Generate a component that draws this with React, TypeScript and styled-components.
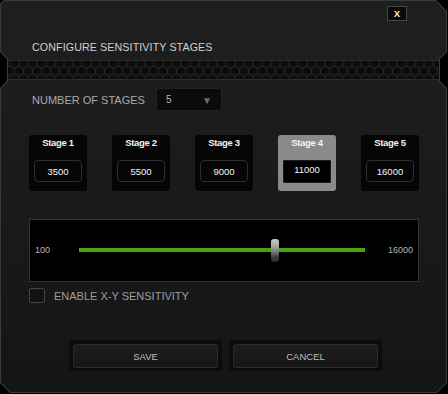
import React from "react";
import styled, { createGlobalStyle } from "styled-components";

const Global = createGlobalStyle`
  html, body { margin: 0; padding: 0; background: #000; }
  body { font-family: "Liberation Sans", Arial, sans-serif; }
  #root { width: 448px; height: 394px; }
`;

const OUTER =
  "polygon(4px 0, 436px 0, 447px 11px, 447px 52px, 440px 59px, 440px 81px, 447px 88px, 447px 383px, 437px 393px, 10px 393px, 0 383px, 0 88px, 7px 81px, 7px 59px, 0 52px, 0 4px)";
const INNER =
  "polygon(4.4px 1px, 435.6px 1px, 446px 11.4px, 446px 51.6px, 439px 58.6px, 439px 81.4px, 446px 88.4px, 446px 382.6px, 436.6px 392px, 10.4px 392px, 1px 382.6px, 1px 88.4px, 8px 81.4px, 8px 58.6px, 1px 51.6px, 1px 4.4px)";

const Frame = styled.div`
  width: 448px;
  height: 394px;
  background: #3a3a3a;
  clip-path: ${OUTER};
`;

const Inner = styled.div`
  width: 448px;
  height: 394px;
  clip-path: ${INNER};
  background: linear-gradient(180deg, #1f1f1f 0%, #1a1a1a 50%, #151515 100%);
  display: flex;
  flex-direction: column;
`;

const Header = styled.div`
  height: 60px;
  box-sizing: border-box;
  padding: 6px 41px 0 32px;
  display: flex;
  flex-direction: column;
`;

const CloseRow = styled.div`
  display: flex;
  justify-content: flex-end;
`;

const CloseBtn = styled.div`
  width: 20px;
  height: 15px;
  box-sizing: border-box;
  border: 1px solid #474747;
  background: #0a0a0a;
  color: #f0f0f0;
  font-size: 9px;
  font-weight: bold;
  display: flex;
  align-items: center;
  justify-content: center;
`;

const Title = styled.div`
  margin-top: 20px;
  line-height: 13px;
  font-size: 10.7px;
  color: #d0d0d0;
  letter-spacing: 0.1px;
`;

const Strip = styled.div`
  height: 20px;
  box-sizing: border-box;
  margin: 0 9px 0 8px;
  border-top: 1px solid #2c2c2c;
  border-bottom: 1px solid #2c2c2c;
  background: #0d0d0d;
  overflow: hidden;
  display: flex;
`;

const Body = styled.div`
  padding: 8px 0 0 29px;
  display: flex;
  flex-direction: column;
`;

const StagesRow = styled.div`
  height: 23px;
  display: flex;
  align-items: center;
  gap: 11px;
`;

const Label = styled.div`
  margin-left: 3px;
  font-size: 11px;
  color: #a9a9a9;
`;

const Dropdown = styled.div`
  width: 66px;
  height: 23px;
  box-sizing: border-box;
  background: #0b0b0b;
  border: 1px solid #222;
  border-radius: 3px;
  display: flex;
  align-items: center;
  justify-content: space-between;
  padding: 0 9px 0 9px;
  color: #b8b8b8;
  font-size: 10px;
`;

const Arrow = styled.span`
  color: #6c6c6c;
  font-size: 10px;
  margin-top: 1px;
`;

const Cards = styled.div`
  margin-top: 24px;
  display: flex;
  gap: 25px;
`;

const Card = styled.div<{ $active?: boolean }>`
  width: 58px;
  height: 56px;
  box-sizing: border-box;
  border-radius: 3px;
  background: ${(p) => (p.$active ? "#8a8a8a" : "#050505")};
  display: flex;
  flex-direction: column;
  align-items: center;
  padding-top: 2px;
`;

const CardTitle = styled.div`
  line-height: 12px;
  font-size: 9.5px;
  font-weight: bold;
  letter-spacing: -0.3px;
  color: #f4f4f4;
`;

const ValueBox = styled.div<{ $active?: boolean }>`
  margin-top: 11px;
  width: 48px;
  height: ${(p) => (p.$active ? "23px" : "22px")};
  box-sizing: border-box;
  border: 1px solid ${(p) => (p.$active ? "#1c1c1c" : "#2f2f2f")};
  border-radius: ${(p) => (p.$active ? "1px" : "4px")};
  background: ${(p) => (p.$active ? "#000" : "#060606")};
  color: #f4f4f4;
  font-size: 9.5px;
  display: flex;
  align-items: center;
  justify-content: center;
  padding-bottom: ${(p) => (p.$active ? "5px" : "0")};
`;

const SliderBox = styled.div`
  margin-top: 28px;
  width: 390px;
  height: 63px;
  box-sizing: border-box;
  border: 1px solid #333;
  background: #000;
  display: flex;
  align-items: center;
  padding: 0 5px 2px 5px;
`;

const RangeLabel = styled.div<{ $right?: boolean }>`
  font-size: 9px;
  color: #b5b5b5;
  width: ${(p) => (p.$right ? "auto" : "44px")};
  margin-left: ${(p) => (p.$right ? "auto" : "0")};
`;

const Track = styled.div`
  position: relative;
  width: 286px;
  height: 4px;
  background: #46a414;
`;

const Thumb = styled.div`
  position: absolute;
  top: -9px;
  width: 8px;
  height: 23px;
  margin-left: -4px;
  border-radius: 3px;
  background: linear-gradient(180deg, #c9c9c9 0%, #a8a8a8 30%, #7a7a7a 55%, #3a3a3a 80%, #2a2a2a 100%);
`;

const CheckRow = styled.div`
  margin-top: 6px;
  display: flex;
  align-items: center;
  gap: 9px;
`;

const Check = styled.div`
  width: 16px;
  height: 15px;
  box-sizing: border-box;
  border: 1px solid #464646;
  border-radius: 2px;
  background: #121212;
`;

const CheckLabel = styled.div`
  font-size: 11px;
  color: #9e9e9e;
`;

const Buttons = styled.div`
  margin-top: 37px;
  margin-left: 40px;
  display: flex;
  gap: 7px;
`;

const BtnOuter = styled.div`
  width: 153px;
  height: 31px;
  box-sizing: border-box;
  padding: 4px 4px 3px 4px;
  background: #0c0c0c;
  border-radius: 2px;
  display: flex;
`;

const BtnInner = styled.div`
  flex: 1;
  box-sizing: border-box;
  border: 1px solid #2b2b2b;
  border-radius: 3px;
  background: linear-gradient(180deg, #1e1e1e 0%, #161616 100%);
  color: #bdbdbd;
  font-size: 9.5px;
  display: flex;
  align-items: center;
  justify-content: center;
`;

const HexStrip = () => (
  <svg width="431" height="18" viewBox="0 0 431 18">
    <defs>
      <pattern id="hex" width="9" height="15.6" patternUnits="userSpaceOnUse" x="2" y="-3">
        <path
          d="M0 2.6 L4.5 0 L9 2.6 L9 7.8 L4.5 10.4 L0 7.8 Z M4.5 10.4 L4.5 15.6"
          fill="none"
          stroke="#272727"
          strokeWidth="1"
        />
      </pattern>
    </defs>
    <rect width="431" height="18" fill="url(#hex)" />
  </svg>
);

const stages = [
  { name: "Stage 1", value: "3500" },
  { name: "Stage 2", value: "5500" },
  { name: "Stage 3", value: "9000" },
  { name: "Stage 4", value: "11000", active: true },
  { name: "Stage 5", value: "16000" },
];

export default function App() {
  const min = 100;
  const max = 16000;
  const current = 11000;
  const pct = ((current - min) / (max - min)) * 100;
  return (
    <>
      <Global />
      <Frame>
        <Inner>
          <Header>
            <CloseRow>
              <CloseBtn>X</CloseBtn>
            </CloseRow>
            <Title>CONFIGURE SENSITIVITY STAGES</Title>
          </Header>
          <Strip>
            <HexStrip />
          </Strip>
          <Body>
            <StagesRow>
              <Label>NUMBER OF STAGES</Label>
              <Dropdown>
                <span>5</span>
                <Arrow>▼</Arrow>
              </Dropdown>
            </StagesRow>
            <Cards>
              {stages.map((s) => (
                <Card key={s.name} $active={s.active}>
                  <CardTitle>{s.name}</CardTitle>
                  <ValueBox $active={s.active}>{s.value}</ValueBox>
                </Card>
              ))}
            </Cards>
            <SliderBox>
              <RangeLabel>100</RangeLabel>
              <Track>
                <Thumb style={{ left: `${pct}%` }} />
              </Track>
              <RangeLabel $right>16000</RangeLabel>
            </SliderBox>
            <CheckRow>
              <Check />
              <CheckLabel>ENABLE X-Y SENSITIVITY</CheckLabel>
            </CheckRow>
            <Buttons>
              <BtnOuter>
                <BtnInner>SAVE</BtnInner>
              </BtnOuter>
              <BtnOuter>
                <BtnInner>CANCEL</BtnInner>
              </BtnOuter>
            </Buttons>
          </Body>
        </Inner>
      </Frame>
    </>
  );
}
